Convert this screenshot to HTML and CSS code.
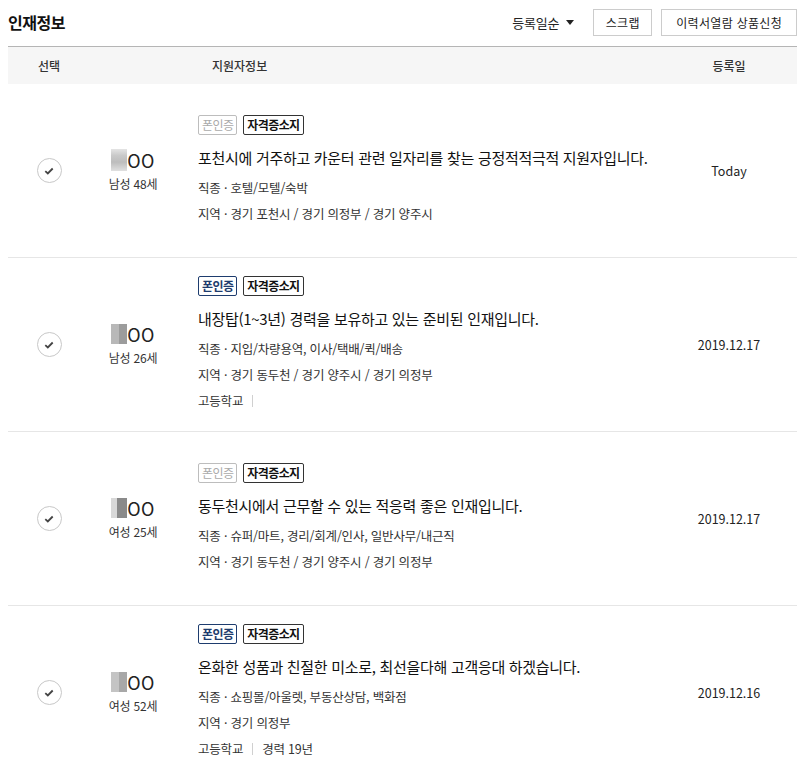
FILE: index.html
```html
<!DOCTYPE html>
<html lang="ko">
<head>
<meta charset="utf-8">
<link rel="stylesheet" href="styles.css">
</head>
<body>
<div class="page">
  <div class="topbar">
    <h1 class="title">인재정보</h1>
    <div class="tools">
      <div class="sort">등록일순 <span class="caret"></span></div>
      <button class="btn">스크랩</button>
      <button class="btn">이력서열람 상품신청</button>
    </div>
  </div>
  <div class="list">
    <div class="head">
      <div class="h-check">선택</div>
      <div class="h-info">지원자정보</div>
      <div class="h-date">등록일</div>
    </div>

    <div class="row">
      <div class="c-check"><span class="circle"><svg width="10" height="8" viewBox="0 0 10 8"><path d="M1.3 4.2 L3.8 6.5 L8.7 1.5" fill="none" stroke="#444" stroke-width="1.8"/></svg></span></div>
      <div class="c-name">
        <div class="name"><span class="blur b1"></span>OO</div>
        <div class="age">남성 48세</div>
      </div>
      <div class="c-info">
        <div class="badges"><span class="badge off">폰인증</span><span class="badge dark">자격증소지</span></div>
        <div class="headline">포천시에 거주하고 카운터 관련 일자리를 찾는 긍정적적극적 지원자입니다.</div>
        <div class="meta">
          <div class="line">직종 · 호텔/모텔/숙박</div>
          <div class="line">지역 · 경기 포천시 / 경기 의정부 / 경기 양주시</div>
        </div>
      </div>
      <div class="c-date">Today</div>
    </div>

    <div class="row">
      <div class="c-check"><span class="circle"><svg width="10" height="8" viewBox="0 0 10 8"><path d="M1.3 4.2 L3.8 6.5 L8.7 1.5" fill="none" stroke="#444" stroke-width="1.8"/></svg></span></div>
      <div class="c-name">
        <div class="name"><span class="blur b2"></span>OO</div>
        <div class="age">남성 26세</div>
      </div>
      <div class="c-info">
        <div class="badges"><span class="badge on">폰인증</span><span class="badge dark">자격증소지</span></div>
        <div class="headline">내장탑(1~3년) 경력을 보유하고 있는 준비된 인재입니다.</div>
        <div class="meta">
          <div class="line">직종 · 지입/차량용역, 이사/택배/퀵/배송</div>
          <div class="line">지역 · 경기 동두천 / 경기 양주시 / 경기 의정부</div>
          <div class="line">고등학교 <span class="sep"></span></div>
        </div>
      </div>
      <div class="c-date">2019.12.17</div>
    </div>

    <div class="row">
      <div class="c-check"><span class="circle"><svg width="10" height="8" viewBox="0 0 10 8"><path d="M1.3 4.2 L3.8 6.5 L8.7 1.5" fill="none" stroke="#444" stroke-width="1.8"/></svg></span></div>
      <div class="c-name">
        <div class="name"><span class="blur b3"></span>OO</div>
        <div class="age">여성 25세</div>
      </div>
      <div class="c-info">
        <div class="badges"><span class="badge off">폰인증</span><span class="badge dark">자격증소지</span></div>
        <div class="headline">동두천시에서 근무할 수 있는 적응력 좋은 인재입니다.</div>
        <div class="meta">
          <div class="line">직종 · 슈퍼/마트, 경리/회계/인사, 일반사무/내근직</div>
          <div class="line">지역 · 경기 동두천 / 경기 양주시 / 경기 의정부</div>
        </div>
      </div>
      <div class="c-date">2019.12.17</div>
    </div>

    <div class="row">
      <div class="c-check"><span class="circle"><svg width="10" height="8" viewBox="0 0 10 8"><path d="M1.3 4.2 L3.8 6.5 L8.7 1.5" fill="none" stroke="#444" stroke-width="1.8"/></svg></span></div>
      <div class="c-name">
        <div class="name"><span class="blur b4"></span>OO</div>
        <div class="age">여성 52세</div>
      </div>
      <div class="c-info">
        <div class="badges"><span class="badge on">폰인증</span><span class="badge dark">자격증소지</span></div>
        <div class="headline">온화한 성품과 친절한 미소로, 최선을다해 고객응대 하겠습니다.</div>
        <div class="meta">
          <div class="line">직종 · 쇼핑몰/아울렛, 부동산상담, 백화점</div>
          <div class="line">지역 · 경기 의정부</div>
          <div class="line">고등학교 <span class="sep"></span> 경력 19년</div>
        </div>
      </div>
      <div class="c-date">2019.12.16</div>
    </div>
  </div>
</div>
</body>
</html>
```
FILE: styles.css
```css
* { box-sizing: border-box; }
html, body { margin: 0; padding: 0; background: #fff; }
body {
  font-family: "Noto Sans CJK KR", "Noto Sans", sans-serif;
  color: #222;
}
.page {
  width: 789px;
  margin-left: 8px;
}
.topbar {
  height: 47px;
  display: flex;
  align-items: center;
  justify-content: space-between;
  border-bottom: 1px solid #b5b5b5;
  padding-bottom: 2px;
}
.title {
  margin: 0;
  font-size: 16px;
  font-weight: 700;
  letter-spacing: -0.5px;
  color: #111;
}
.tools {
  display: flex;
  align-items: center;
}
.sort {
  font-size: 13px;
  color: #222;
  display: flex;
  align-items: center;
  gap: 7px;
  margin-right: 10px;
  letter-spacing: -0.2px;
}
.caret {
  display: inline-block;
  width: 0;
  height: 0;
  border-left: 4px solid transparent;
  border-right: 4px solid transparent;
  border-top: 5px solid #222;
}
.btn {
  font-family: inherit;
  font-size: 12px;
  color: #222;
  background: #fff;
  border: 1px solid #ccc;
  height: 27px;
  padding: 0 14px;
  margin-left: 9px;
  letter-spacing: 0.3px;
}
.btn:first-of-type { width: 59px; padding: 0; }
.head {
  display: grid;
  grid-template-columns: 82px 86px 1fr 136px;
  background: #f6f6f6;
  height: 37px;
  align-items: center;
  font-size: 12px;
  font-weight: 500;
  color: #333;
}
.h-check { text-align: center; }
.h-info { grid-column: 2 / 4; padding-left: 122px; }
.h-date { text-align: center; }
.row {
  display: grid;
  grid-template-columns: 82px 86px 1fr 136px;
  align-items: center;
  height: 174px;
  border-bottom: 1px solid #e6e6e6;
}
.c-check { display: flex; justify-content: center; }
.circle {
  width: 25px;
  height: 25px;
  border: 1px solid #c8c8c8;
  border-radius: 50%;
  display: flex;
  align-items: center;
  justify-content: center;
}
.c-name {
  display: flex;
  flex-direction: column;
  align-items: center;
  margin-top: -1px;
}
.name {
  display: flex;
  align-items: center;
  font-size: 18px;
  line-height: 24px;
  color: #222;
  font-weight: 400;
  letter-spacing: 0.5px;
}
.blur {
  display: inline-block;
  width: 16px;
  height: 22px;
}
.b1 { background: linear-gradient(180deg, #e4e4e4 0%, #c9c9c9 30%, #bdbdbd 60%, #e0e0e0 100%); }
.b2 { background: linear-gradient(90deg, #b8b8b8 0 50%, #9c9c9c 50% 100%); height: 20px; }
.b3 { background: linear-gradient(90deg, #d8d8d8 0 40%, #8a8a8a 40% 100%); height: 20px; }
.b4 { background: linear-gradient(90deg, #c4c4c4 0 50%, #a8a8a8 50% 100%); height: 20px; }
.age {
  font-size: 12px;
  line-height: 18px;
  margin-top: 3px;
  color: #333;
  letter-spacing: -0.2px;
}
.c-info { padding-left: 22px; }
.badges { display: flex; gap: 6px; height: 20px; }
.badge {
  font-size: 12px;
  line-height: 18px;
  height: 20px;
  padding: 0 3px;
  border: 1px solid #333;
  border-radius: 2px;
  letter-spacing: -0.6px;
}
.badge.off { border-color: #bdbdbd; color: #aaa; }
.badge.on { border-color: #1e3c6e; color: #1e3c6e; font-weight: 700; }
.badge.dark { border-color: #333; color: #111; font-weight: 700; }
.headline {
  margin-top: 11px;
  font-size: 15px;
  line-height: 24px;
  color: #111;
  letter-spacing: -0.3px;
}
.meta { margin-top: 5px; }
.line {
  font-size: 12.5px;
  line-height: 26px;
  color: #333;
  letter-spacing: -0.2px;
  display: flex;
  align-items: center;
  gap: 5px;
}
.sep {
  display: inline-block;
  width: 1px;
  height: 12px;
  background: #d0d0d0;
  margin: 0 4px;
}
.c-date {
  text-align: center;
  font-size: 12.5px;
  color: #222;
}
```
